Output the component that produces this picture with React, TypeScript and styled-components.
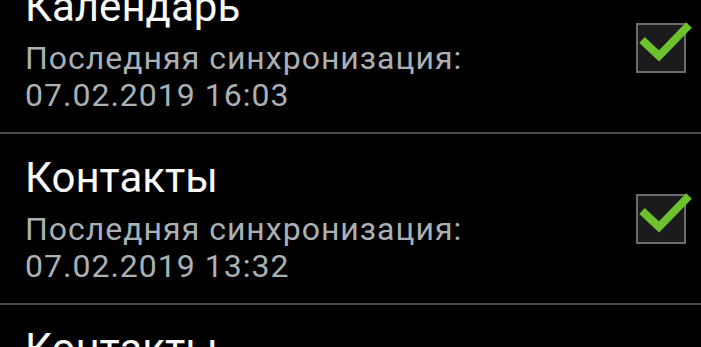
import React from "react";
import styled, { createGlobalStyle } from "styled-components";

const Global = createGlobalStyle`
  html, body { margin: 0; padding: 0; background: #000; }
  body { overflow: hidden; font-family: Roboto, "Noto Sans", sans-serif; }
`;

const Screen = styled.div`
  width: 701px;
  height: 347px;
  background: #000;
  overflow: hidden;
`;

const List = styled.div`
  display: flex;
  flex-direction: column;
  margin-top: -37px;
`;

const Row = styled.div`
  display: flex;
  align-items: center;
  height: 169px;
  padding: 0 15px 0 25px;
  border-bottom: 2px solid #4a4a4a;
`;

const Texts = styled.div`
  flex: 1;
  display: flex;
  flex-direction: column;
  padding-top: 1px;
`;

const Title = styled.div`
  color: #fafafa;
  font-size: 42px;
  line-height: 50px;
  margin-bottom: 8px;
`;

const Sub = styled.div`
  color: #aab1b5;
  font-size: 32px;
  line-height: 37.5px;
  letter-spacing: 1px;
`;

const Box = styled.div`
  position: relative;
  width: 46px;
  height: 46px;
  border: 2px solid #6c6c6c;
  background: #1b1b1d;
  flex: none;
`;

const Tick = styled.svg`
  position: absolute;
  left: 0;
  top: 0;
  overflow: visible;
`;

const Check = () => (
  <Box>
    <Tick width="46" height="46" viewBox="0 0 46 46">
      <path d="M4 15 L21 31 L51 0" fill="none" stroke="#6cc12c" strokeWidth="8" strokeLinejoin="miter" />
    </Tick>
  </Box>
);

const items = [
  { title: "Календарь", date: "07.02.2019 16:03" },
  { title: "Контакты", date: "07.02.2019 13:32" },
  { title: "Контакты", date: "07.02.2019 13:32" },
];

export default function App() {
  return (
    <Screen>
      <Global />
      <List>
        {items.map((it, i) => (
          <Row key={i}>
            <Texts>
              <Title>{it.title}</Title>
              <Sub>Последняя синхронизация:</Sub>
              <Sub>{it.date}</Sub>
            </Texts>
            <Check />
          </Row>
        ))}
      </List>
    </Screen>
  );
}
